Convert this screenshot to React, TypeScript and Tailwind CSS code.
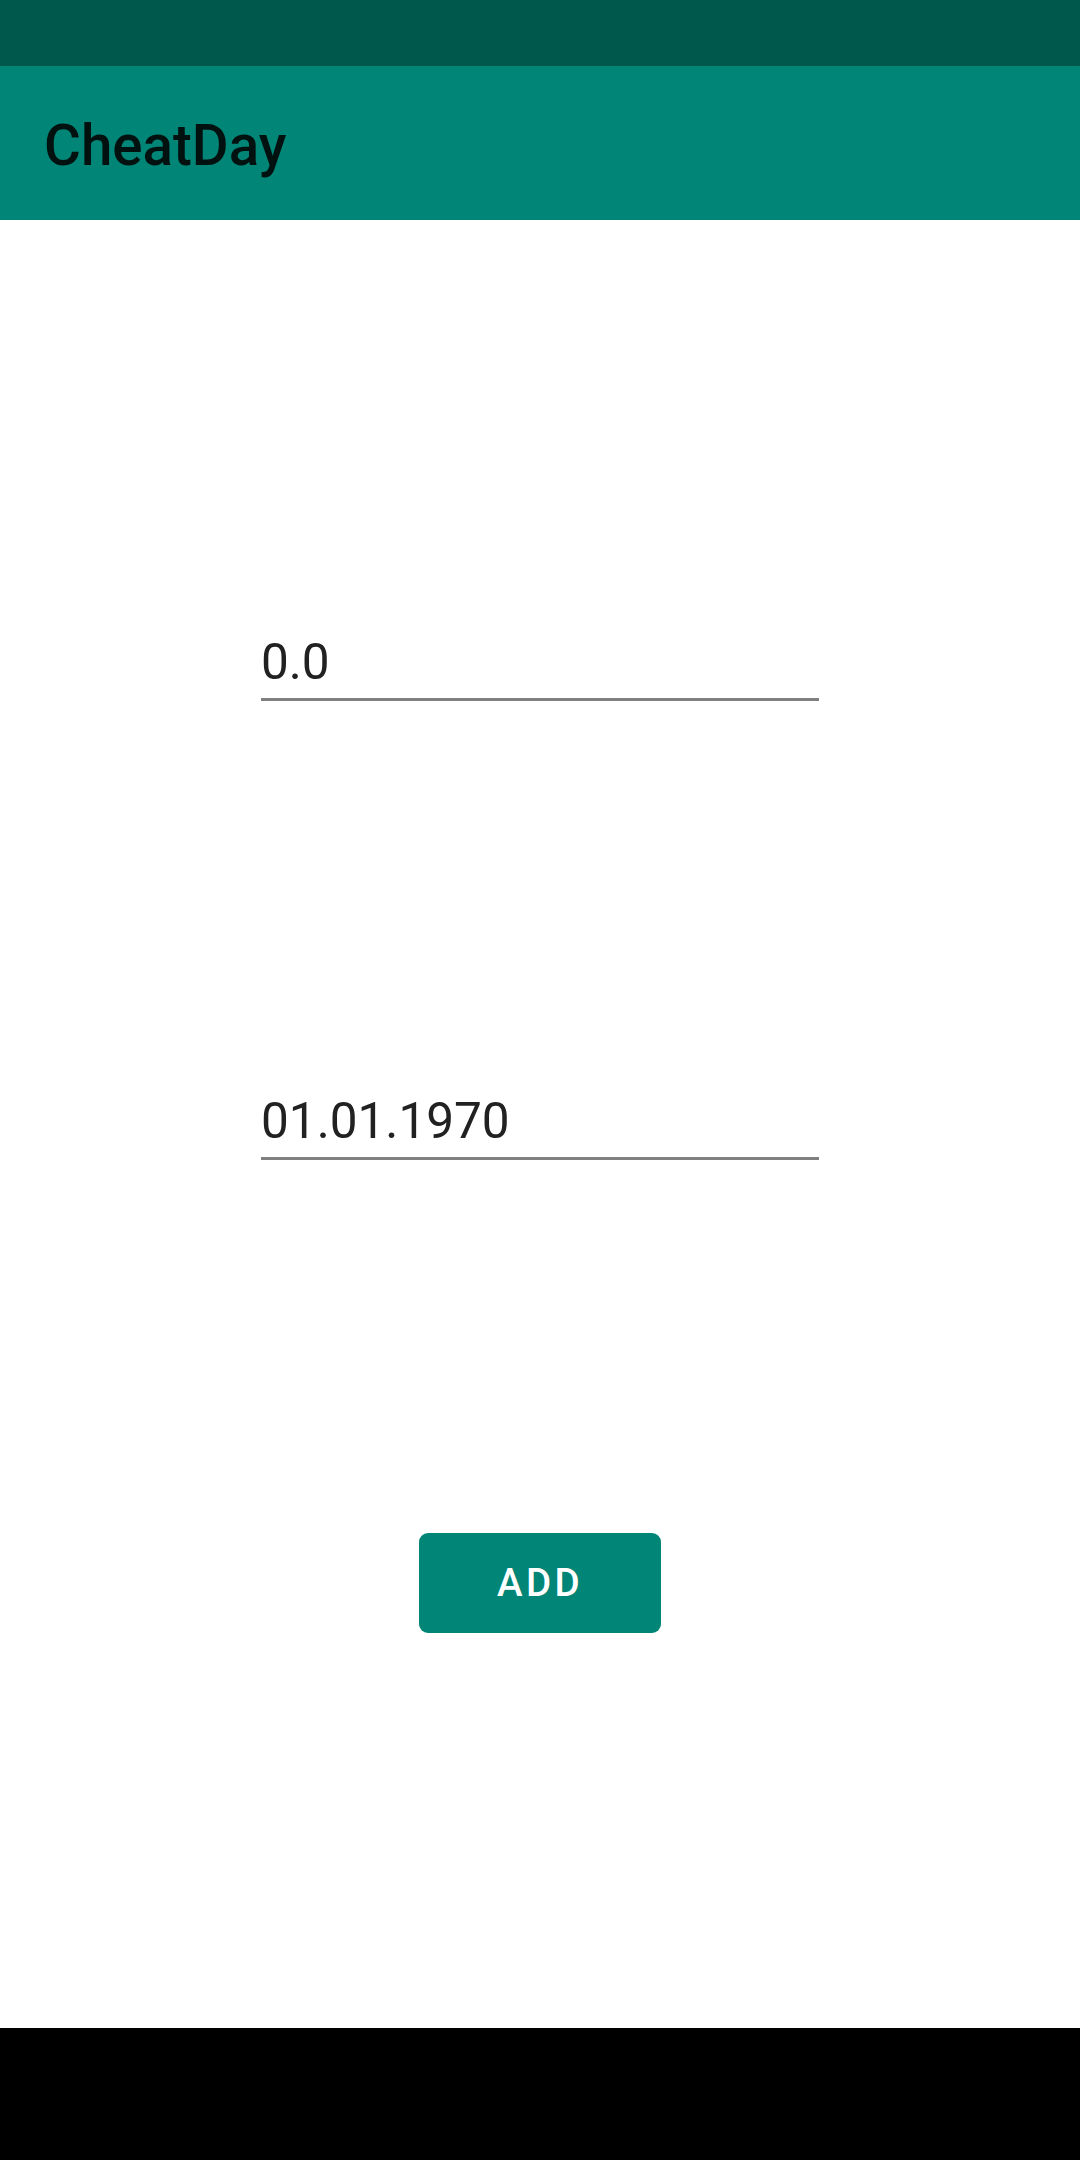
const roboto = "font-['Roboto',_'Liberation_Sans',_sans-serif]";

function Field({ value, className = '' }: { value: string; className?: string }) {
  return (
    <div className={`w-[558px] border-b-[3px] border-[#808080] pb-[7px] ${className}`}>
      <div className="text-[49.5px] leading-[58px] text-[#212121]">{value}</div>
    </div>
  );
}

export default function App() {
  return (
    <div className={`flex h-[2160px] w-[1080px] flex-col bg-white ${roboto}`}>
      {/* status bar */}
      <div className="h-[66px] shrink-0 bg-[#00574b]" />

      {/* toolbar */}
      <header className="flex h-[154px] shrink-0 items-center bg-[#008577] pl-[44px] pt-[7px]">
        <h1 className="text-[56.5px] font-medium leading-none text-black/[0.87]">CheatDay</h1>
      </header>

      <main className="flex flex-1 flex-col items-center">
        <Field value="0.0" className="mt-[413px]" />
        <Field value="01.01.1970" className="mt-[391px]" />
        <button className="mt-[373px] flex h-[100px] w-[242px] items-center justify-center rounded-[9px] bg-[#008577] text-[38.5px] font-medium tracking-[3.4px] text-white">
          ADD
        </button>
      </main>

      {/* navigation bar */}
      <div className="h-[132px] shrink-0 bg-black" />
    </div>
  );
}
